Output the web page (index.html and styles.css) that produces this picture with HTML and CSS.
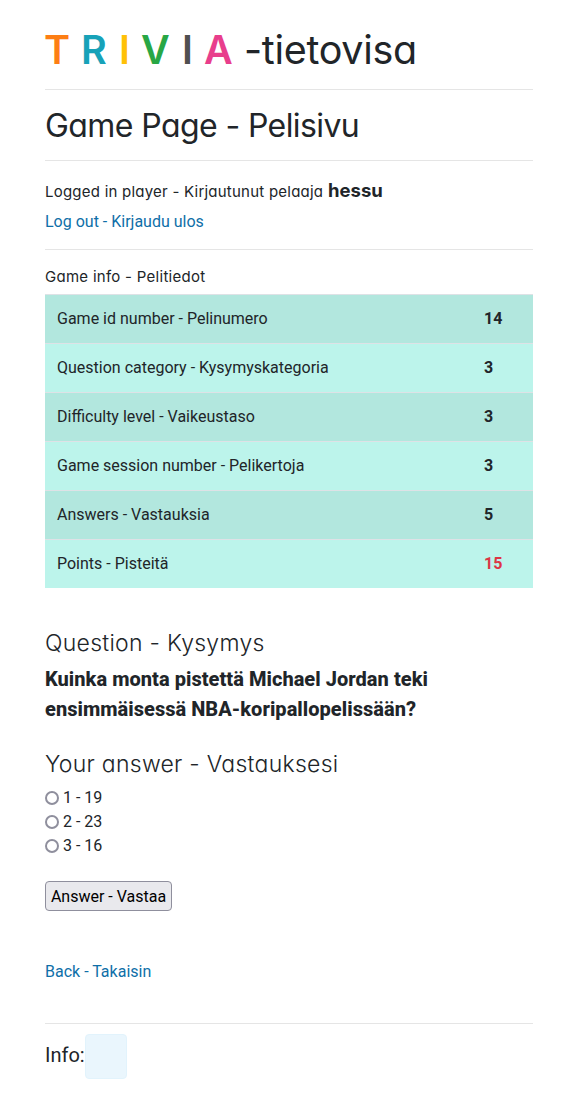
FILE: index.html
```html
<!DOCTYPE html>
<html lang="fi">
<head>
<meta charset="utf-8">
<title>TRIVIA-tietovisa</title>
<link rel="stylesheet" href="styles.css">
</head>
<body>
<main class="page">
  <h1 class="brand"><span class="brand-letter orange">T</span><span class="brand-letter teal">R</span><span class="brand-letter yellow">I</span><span class="brand-letter green">V</span><span class="brand-letter gray">I</span><span class="brand-letter pink">A</span><span class="brand-rest">-tietovisa</span></h1>
  <h2 class="page-title"><span>Game Page - Pelisivu</span></h2>
  <section class="player">
    <h6 class="player-line"><span class="player-label">Logged in player - Kirjautunut pelaaja</span><strong class="player-name">hessu</strong></h6>
    <a class="link" href="#">Log out - Kirjaudu ulos</a>
  </section>
  <h6 class="info-title"><span>Game info - Pelitiedot</span></h6>
  <table class="info-table">
    <tr><td>Game id number - Pelinumero</td><td class="value">14</td></tr>
    <tr><td>Question category - Kysymyskategoria</td><td class="value">3</td></tr>
    <tr><td>Difficulty level - Vaikeustaso</td><td class="value">3</td></tr>
    <tr><td>Game session number - Pelikertoja</td><td class="value">3</td></tr>
    <tr><td>Answers - Vastauksia</td><td class="value">5</td></tr>
    <tr><td>Points - Pisteitä</td><td class="value points">15</td></tr>
  </table>
  <h4 class="section-title"><span class="question-title">Question - Kysymys</span></h4>
  <p class="question">Kuinka monta pistettä Michael Jordan teki ensimmäisessä NBA-koripallopelissään?</p>
  <h4 class="section-title"><span class="answer-title">Your answer - Vastauksesi</span></h4>
  <form>
    <label class="option"><input type="radio" name="answer">1 - 19</label>
    <label class="option"><input type="radio" name="answer">2 - 23</label>
    <label class="option"><input type="radio" name="answer">3 - 16</label>
    <button class="submit" type="button">Answer - Vastaa</button>
  </form>
  <a class="link back" href="#">Back - Takaisin</a>
  <footer class="info"><span>Info:</span><span class="info-box"></span></footer>
</main>
</body>
</html>
```
FILE: styles.css
```css
* { box-sizing: border-box; }
body {
  margin: 0;
  background: #fff;
  color: #212529;
  font: 400 16px/24px Roboto, sans-serif;
}
.page { width: 488px; margin: 0 0 0 45px; padding-top: 20px; }
h1, h2, h4, h6 {
  margin: 0;
  font-family: Inter, sans-serif;
  font-feature-settings: "cv11" 1;
  font-weight: 400;
  white-space: nowrap;
}
.brand {
  display: flex;
  height: 70px;
  border-bottom: 1px solid #e5e5e5;
  font-size: 39.5px;
  line-height: 60px;
}
.brand-letter { font-weight: 600; }
.orange { width: 37px; margin-left: -1px; color: #fd7e14; }
.teal { width: 38px; color: #17a2b8; }
.yellow { width: 22px; color: #ffc107; }
.green { width: 41px; color: #28a745; }
.gray { width: 22px; color: #505050; }
.pink { width: 40px; color: #e83e8c; }
.brand-rest { letter-spacing: -0.3px; }
.page-title {
  height: 71px;
  border-bottom: 1px solid #e5e5e5;
  font-size: 32px;
  line-height: 71px;
  letter-spacing: -0.59px;
}
.player { height: 89px; padding-top: 17px; border-bottom: 1px solid #e5e5e5; }
.player-line { display: flex; align-items: baseline; height: 32px; font-size: 15px; line-height: 25px; }
.player-label { width: 283px; letter-spacing: 0.23px; }
.player-name { font-size: 18.5px; font-weight: 650; }
.link { display: block; color: #0f6fa8; text-decoration: none; }
.info-title { height: 44px; padding-top: 15px; font-size: 15px; line-height: 24px; letter-spacing: 0.28px; }
.info-table { width: 488px; table-layout: fixed; border-spacing: 0; }
.info-table td { height: 49px; padding: 0 12px; border-top: 1px solid #dee2e6; background: #bcf4eb; }
.info-table td:first-child { width: 427px; }
.info-table tr:nth-child(odd) td { background: #b2e7de; }
.info-table .value { font-weight: 700; }
.info-table .points { color: #dc3545; }
.section-title { font-size: 23px; font-weight: 350; line-height: 29px; letter-spacing: 0.27px; }
.info-table + .section-title { margin-top: 41px; }
.question { margin: 6px 0 26px; font-size: 20px; line-height: 30px; font-weight: 800; letter-spacing: 0.04px; }
.section-title + form { margin-top: 7px; }
.option { display: flex; align-items: center; gap: 4px; height: 24px; }
.option input {
  appearance: none;
  width: 14px;
  height: 14px;
  margin: 0;
  border: 2px solid #8f8f9d;
  border-radius: 50%;
  background: #fff;
}
.submit {
  display: block;
  width: 127px;
  height: 30px;
  margin-top: 23px;
  padding: 1px 0 0;
  border: 1px solid #8f8f9d;
  border-radius: 4px;
  background: #e9e9ed;
  color: #000;
  font: 400 16px/24px Roboto, sans-serif;
}
.back { margin-top: 49px; }
.info {
  display: flex;
  margin-top: 39px;
  padding-top: 10px;
  border-top: 1px solid #e5e5e5;
  font-size: 20px;
  line-height: 43px;
}
.info-box {
  width: 42px;
  height: 45px;
  border: 1px solid #e2f3fc;
  border-radius: 4px;
  background: #eaf6fd;
}
```
